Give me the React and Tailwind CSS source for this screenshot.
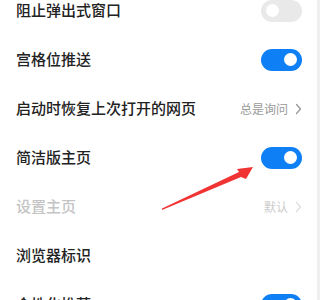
import React from 'react';

const Toggle = ({ on }) => (
  <div
    className={
      'w-[41px] h-[22px] rounded-full flex items-center px-[5px] ' +
      (on ? 'bg-[#0f7ff5] justify-end' : 'bg-[#e9e9e9] justify-start')
    }
  >
    <div className="w-[13px] h-[13px] rounded-full bg-white" />
  </div>
);

const Chevron = ({ color }) => (
  <svg width="7" height="12" viewBox="0 0 7 12" fill="none">
    <path d="M1.5 1.5L5.5 6L1.5 10.5" stroke={color} strokeWidth="1.3" strokeLinecap="round" strokeLinejoin="round" />
  </svg>
);

const rows = [
  { label: '阻止弹出式窗口', toggle: false },
  { label: '宫格位推送', toggle: true },
  { label: '启动时恢复上次打开的网页', value: '总是询问' },
  { label: '简洁版主页', toggle: true },
  { label: '设置主页', value: '默认', disabled: true },
  { label: '浏览器标识' },
  { label: '个性化推荐', toggle: true },
];

export default function App() {
  return (
    <div
      className="relative w-[320px] h-[300px] overflow-hidden bg-white flex"
      style={{ fontFamily: '"Noto Sans CJK SC", "Noto Sans", sans-serif' }}
    >
      <div className="flex-1 flex flex-col -mt-[14px]">
        {rows.map((r) => (
          <div key={r.label} className="h-[49px] shrink-0 flex items-center justify-between pl-[16px] pr-[15px]">
            <span
              className={
                'text-[15px] font-medium ' + (r.disabled ? 'text-[#c4c4c4]' : 'text-[#222222]')
              }
            >
              {r.label}
            </span>
            {r.toggle !== undefined && <Toggle on={r.toggle} />}
            {r.value && (
              <div className="flex items-center gap-[7px]">
                <span className={'text-[12px] ' + (r.disabled ? 'text-[#cccccc]' : 'text-[#9a9a9a]')}>
                  {r.value}
                </span>
                <Chevron color={r.disabled ? '#dddddd' : '#999999'} />
              </div>
            )}
          </div>
        ))}
      </div>
      <div className="w-[3px] bg-[#efefef]" />
      <svg className="absolute left-0 top-0" width="320" height="300" viewBox="0 0 320 300">
        <polygon points="162,210 241,177 246,179 253,167 237,169 239,172 162,208.5" fill="#f03333" />
      </svg>
    </div>
  );
}
